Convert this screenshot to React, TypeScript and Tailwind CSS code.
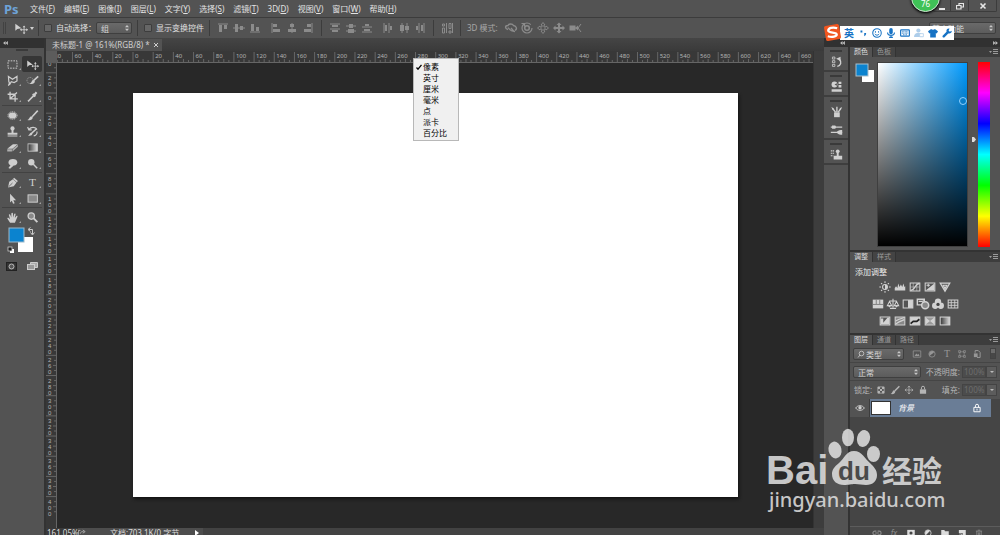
import { useState } from 'react';
import type { ReactNode } from 'react';
import clsx from 'clsx';

const DOC_WIDTH = 600;
const DOC_HEIGHT = 400;
const ZOOM = 1.009;
const ORIGIN_X = 76;
const ORIGIN_Y = 30;

const menus = [
  ['文件', 'F'],
  ['编辑', 'E'],
  ['图像', 'I'],
  ['图层', 'L'],
  ['文字', 'Y'],
  ['选择', 'S'],
  ['滤镜', 'T'],
  ['3D', 'D'],
  ['视图', 'V'],
  ['窗口', 'W'],
  ['帮助', 'H'],
];

const units = ['像素', '英寸', '厘米', '毫米', '点', '派卡', '百分比'];

/* ---------- icons ---------- */

interface IconProps {
  children: ReactNode;
  className?: string;
}

// 16x16 outline icon, fill can be set per shape
function Icon({ children, className = 'w-4 h-4' }: IconProps) {
  return (
    <svg viewBox="0 0 16 16" className={clsx('shrink-0', className)} fill="none" stroke="currentColor" strokeWidth="1.2" aria-hidden="true">
      {children}
    </svg>
  );
}

const solid = { fill: 'currentColor', stroke: 'none' };

const moveShape = (
  <>
    <path d="M1.500 3v8l2.300-2 4.700-.6z" {...solid} />
    <path d="M11.500 6v8M7.500 10h8" strokeWidth="1" />
    <path d="M11.500 5l1.600 2h-3.200zM11.500 15l1.600-2h-3.200zM6.800 10l2-1.600v3.200zM16 10l-2-1.600v3.200z" {...solid} />
  </>
);

const toolGroups: { name: string; shape: ReactNode; plain?: boolean }[][] = [
  [
    { name: '矩形选框', shape: <rect x="2.500" y="3.500" width="11" height="9" strokeDasharray="2 1.300" /> },
    { name: '移动', shape: moveShape, plain: true },
    { name: '多边形套索', shape: <path d="M3 3l5 3.500L13.500 3v5.500l-3.500 2-3.500-1L5 12 3.500 9.500zM4.500 10.500L3 14.500" strokeWidth="1.500" /> },
    {
      name: '快速选择',
      shape: (
        <>
          <circle cx="5" cy="8" r="3.800" strokeDasharray="1.200 1" opacity=".6" />
          <path d="M15 3L9 8.500" strokeWidth="2" />
          <path d="M4.500 12c3.500 1 6 0 6.500-2.700L8.800 7.500C7 7.800 7.300 10.800 4.500 12z" {...solid} />
        </>
      ),
    },
    { name: '裁剪', shape: <path d="M5 2v9h9.500M2 5.200H11.200V14.500M5.500 10.500L13.500 3" strokeWidth="1.600" /> },
    {
      name: '吸管',
      shape: (
        <>
          <path d="M9.500 7L4.500 12 2.500 14" strokeWidth="2" />
          <path d="M8.300 5l3.200 3M10 6.300l3-3.500" strokeWidth="2.600" />
        </>
      ),
    },
  ],
  [
    {
      name: '污点修复画笔',
      shape: (
        <>
          <ellipse cx="8" cy="8" rx="4.800" ry="3.800" {...solid} />
          <ellipse cx="8" cy="8" rx="5.600" ry="4.600" strokeDasharray="1.300 1" />
        </>
      ),
    },
    {
      name: '画笔',
      shape: (
        <>
          <path d="M14.500 2L7.500 9.500" strokeWidth="1.900" />
          <path d="M1.500 13.500c4 .8 6.200 0 6.900-3L6.500 8.800C4 9.400 4.500 12.300 1.500 13.500z" {...solid} />
        </>
      ),
    },
    {
      name: '仿制图章',
      shape: (
        <>
          <circle cx="8" cy="4.200" r="2.600" {...solid} />
          <path d="M6.800 6h2.400v3.500H14V12H2V9.500h4.800zM2 13h12v1.300H2z" {...solid} />
        </>
      ),
    },
    {
      name: '历史记录画笔',
      shape: (
        <>
          <path d="M2 2.500l1.500 3.500h3.500M4 5c2-3 8-3 9.500.5M13.500 8c.5 2.500-1.500 5-4 5.500" strokeWidth="1.500" />
          <path d="M13 4.500L7 10" strokeWidth="1.700" />
          <path d="M2.500 13c3 .7 5 0 5.500-2.400L6.500 9.200C4.500 9.500 4.800 12 2.500 13z" {...solid} />
        </>
      ),
    },
    {
      name: '橡皮擦',
      shape: (
        <>
          <path d="M1.500 9.500L8.500 4h6L8 9.500z" {...solid} />
          <path d="M1.500 10.200h5.800v2.800H1.500zM8 10l6.600-5.400v2.600L8 12.800z" fill="currentColor" stroke="none" opacity=".75" />
        </>
      ),
    },
    {
      name: '渐变',
      shape: (
        <>
          <defs>
            <linearGradient id="tool-gradient">
              <stop offset="0" stopColor="#333" />
              <stop offset="1" stopColor="#ddd" />
            </linearGradient>
          </defs>
          <rect x="2.500" y="3.500" width="11.500" height="9" fill="url(#tool-gradient)" strokeWidth="1" />
        </>
      ),
    },
    {
      name: '涂抹',
      shape: <path d="M3 6.500C3 4 5.500 2.500 8.500 2.500S14 4 14 6.500 11.800 11 9.500 10.500L5 14.500 3 13.500 5.500 10C3.800 9.500 3 8 3 6.500z" {...solid} />,
    },
    {
      name: '减淡',
      shape: (
        <>
          <circle cx="6.500" cy="6.500" r="3.900" {...solid} />
          <path d="M9 9l4.800 4.800" strokeWidth="1.800" />
        </>
      ),
    },
  ],
  [
    {
      name: '钢笔',
      shape: (
        <>
          <path d="M2.500 14l1.500-7L8.500 4l4.500 4-3.500 4.500z" {...solid} />
          <path d="M9.300 3l4.700 4" strokeWidth="2" />
          <path d="M3 13.500L8 8.600" stroke="#535353" strokeWidth=".9" />
        </>
      ),
    },
    {
      name: '横排文字',
      shape: (
        <text x="8" y="12.500" textAnchor="middle" fontSize="14" fontFamily="Liberation Serif, serif" {...solid}>
          T
        </text>
      ),
    },
    { name: '路径选择', shape: <path d="M5 2v11l2.200-2.300 1.500 3.800 2-.8L9 10h3.400z" {...solid} /> },
    { name: '矩形', shape: <rect x="2.500" y="3.500" width="11.500" height="9" fill="#8a8a8a" /> },
  ],
  [
    {
      name: '抓手',
      shape: (
        <path
          d="M5 14.500L1.800 9.500c-.6-1 .8-1.700 1.600-.8L5 10.200 3.500 5c-.2-1.200 1.400-1.500 1.800-.3L6.500 8l.1-5c0-1.200 1.900-1.200 2 0L8.800 8l1.300-4.300c.3-1.200 1.900-.8 1.700.4L10.800 8.500l2-2.300c.7-.9 1.800-.2 1.300.8L12 12l-1 2.500z"
          {...solid}
        />
      ),
    },
    {
      name: '缩放',
      plain: true,
      shape: (
        <>
          <circle cx="6.500" cy="6.300" r="3.900" fill="#888" strokeWidth="1.600" />
          <path d="M9.500 9l4.500 4.700" strokeWidth="2.300" />
        </>
      ),
    },
  ],
];

// bars are given as [x, y, w, h], the guide line as a path
const alignIcons: { guide: string; bars: number[][] }[][] = [
  [
    { guide: 'M3 4h10', bars: [[4, 5, 3, 7], [9, 5, 3, 4]] },
    { guide: 'M2 8h12', bars: [[4, 4, 3, 8], [9, 6, 3, 4]] },
    { guide: 'M3 12h10', bars: [[4, 4, 3, 7], [9, 7, 3, 4]] },
  ],
  [
    { guide: 'M4 3v10', bars: [[5, 4, 4, 3], [5, 9, 7, 3]] },
    { guide: 'M8 3v10', bars: [[6, 4, 4, 3], [4, 9, 8, 3]] },
    { guide: 'M12 3v10', bars: [[7, 4, 4, 3], [4, 9, 7, 3]] },
  ],
  [
    { guide: 'M3 4h10M3 9h10', bars: [[5, 5, 6, 2], [5, 10, 6, 2]] },
    { guide: 'M3 6h10M3 11h10', bars: [[6, 4, 4, 4], [5, 9, 6, 4]] },
    { guide: 'M3 7h10M3 12h10', bars: [[6, 4, 4, 2], [5, 9, 6, 2]] },
  ],
  [
    { guide: 'M4 3v10M9 3v10', bars: [[5, 5, 2, 6], [10, 6, 2, 4]] },
    { guide: 'M6 3v10M11 3v10', bars: [[4, 5, 4, 6], [9, 6, 4, 4]] },
    { guide: 'M7 3v10M12 3v10', bars: [[4, 6, 2, 4], [9, 5, 2, 6]] },
  ],
];

function AlignIcon({ guide, bars }: { guide: string; bars: number[][] }) {
  return (
    <Icon>
      <path d={guide} strokeWidth="1" />
      {bars.map(([x, y, w, h]) => (
        <rect key={`${x}-${y}`} x={x} y={y} width={w} height={h} {...solid} />
      ))}
    </Icon>
  );
}

const mode3d: { name: string; shape: ReactNode }[] = [
  {
    name: '旋转',
    shape: (
      <>
        <path d="M5 9.500C1.500 8.500 2 5.500 5 5.500c1-2 4.500-2 5.500 0 3 .5 4 3.500 1.500 5" strokeWidth="1.400" />
        <path d="M5 7.500c2 3 4 4 7 4M8 8l3 3.500" strokeWidth="1.300" />
      </>
    ),
  },
  { name: '滚动', shape: <><circle cx="8" cy="8" r="5" strokeDasharray="27 5" /><circle cx="8" cy="8" r="2.300" strokeWidth="1.500" /><path d="M2.500 3.500h3v3" /></> },
  { name: '拖动', shape: <path d="M8 2.500L10 5H9v2h2V6l2.500 2L11 10V9H9v2h1l-2 2.500L6 11h1V9H5v1L2.500 8 5 6v1h2V5H6z" strokeWidth=".9" /> },
  { name: '滑动', shape: <path d="M8 2.500L10.500 5H9v2h2.500V5.500L14 8l-2.500 2.500V9H9v2h1.500L8 13.500 5.500 11H7V9H4.500v1.500L2 8l2.500-2.500V7H7V5H5.500z" {...solid} /> },
  { name: '缩放', shape: <><path d="M2.500 5.500h6v5h-6zM8 8l3-2.500v5z" {...solid} /><path d="M14 4l-3 4 3 4" strokeWidth="1" /></> },
];

/* ---------- small shared parts ---------- */

function Divider() {
  return <span className="w-px h-4 shrink-0 bg-[#3c3c3c]" />;
}

function Grip() {
  return <span className="block w-3 h-[2px] mx-auto bg-[#3a3a3a]" />;
}

function Collapse({ right }: { right?: boolean }) {
  return (
    <svg viewBox="0 0 6 5" className={clsx('w-[5px] h-1', right && 'rotate-180')} fill="#bdbdbd" aria-hidden="true">
      <path d="M3 0v5L0 2.500zM6 0v5L3 2.500z" />
    </svg>
  );
}

interface SelectProps {
  label: string;
  options: string[];
  className: string;
  inset?: string;
}

function Select({ label, options, className, inset = 'pl-1' }: SelectProps) {
  return (
    <span className={clsx('relative block', className)}>
      <select
        aria-label={label}
        className={clsx(
          'appearance-none block w-full h-full rounded-[2px] border border-[#3f3f3f] bg-linear-to-b from-[#6a6a6a] to-[#5c5c5c] text-[#d6d6d6] outline-none',
          inset,
        )}
      >
        {options.map(option => (
          <option key={option}>{option}</option>
        ))}
      </select>
      <svg viewBox="0 0 4 6" className="absolute right-[3px] top-1/2 -translate-y-1/2 w-1 h-[6px] pointer-events-none" fill="#c8c8c8" aria-hidden="true">
        <path d="M2 0l2 2.300H0zM2 6l2-2.300H0z" />
      </svg>
    </span>
  );
}

function Check({ label }: { label: string }) {
  return (
    <label className="flex items-center gap-1 whitespace-nowrap">
      <input type="checkbox" className="appearance-none w-2 h-2 rounded-[1px] border border-[#3d3d3d] bg-[#666] checked:bg-[#ddd]" />
      {label}
    </label>
  );
}

function PanelTabs({ tabs }: { tabs: string[] }) {
  const [active, setActive] = useState(tabs[0]);
  return (
    <div className="flex h-[10px] shrink-0 bg-[#3d3d3d]">
      {tabs.map(tab => (
        <button
          key={tab}
          onClick={() => setActive(tab)}
          className={clsx(
            'px-[4px] text-[7px] leading-[10px] border-r border-[#333]',
            tab === active ? 'bg-[#535353] text-[#dedede]' : 'bg-[#444] text-[#9a9a9a]',
          )}
        >
          {tab}
        </button>
      ))}
      <button aria-label="面板菜单" className="ml-auto mr-[2px] text-[#9a9a9a]">
        <svg viewBox="0 0 9 6" className="w-[9px] h-[6px]" fill="currentColor" aria-hidden="true">
          <path d="M0 2h3L1.500 4zM4 0h5v1H4zM4 2h5v1H4zM4 4h5v1H4z" />
        </svg>
      </button>
    </div>
  );
}

/* ---------- top bars ---------- */

function MenuBar() {
  return (
    <header className="relative flex items-center h-[18px] shrink-0 bg-[#535353] border-b border-[#3c3c3c]">
      <span className="w-[26px] pl-1 text-[13px] leading-[16px] font-bold text-[#6ea3d8]">Ps</span>
      <nav className="flex gap-[9px] pl-1">
        {menus.map(([name, key]) => (
          <button key={name} className="leading-[16px] text-[#e2e2e2] whitespace-nowrap">
            {name}(<u className="underline-offset-1">{key}</u>)
          </button>
        ))}
      </nav>
      <div className="flex self-start h-3 ml-auto mr-[3px] border border-t-0 border-[#3c3c3c] rounded-b-[2px] text-[#e6e6e6]">
        <button aria-label="最小化" className="flex items-center justify-center w-4">
          <svg viewBox="0 0 8 8" className="w-2 h-2" aria-hidden="true"><path d="M1 6h6v2H1z" fill="currentColor" /></svg>
        </button>
        <button aria-label="还原" className="flex items-center justify-center w-[18px] border-l border-[#3c3c3c]">
          <svg viewBox="0 0 8 8" className="w-2 h-2" fill="none" stroke="currentColor" aria-hidden="true">
            <path d="M3 3V1.500h4.500V5H5.500M.5 3.500H5V7H.5z" strokeWidth="1.200" />
          </svg>
        </button>
        <button aria-label="关闭" className="flex items-center justify-center w-7 border-l border-[#3c3c3c]">
          <svg viewBox="0 0 8 8" className="w-2 h-2" aria-hidden="true">
            <path d="M1.500 1.500l5 5M6.500 1.500l-5 5" stroke="currentColor" strokeWidth="1.600" />
          </svg>
        </button>
      </div>
      {/* desktop monitor ball */}
      <span className="absolute -top-[17px] right-[60px] flex items-end justify-center w-[29px] h-[29px] pb-[3px] rounded-full border border-[#d4e8d6] bg-[#3fc257] text-[8px] leading-[8px] text-white shadow-sm shadow-black">
        76
      </span>
    </header>
  );
}

function OptionsBar() {
  return (
    <div className="flex items-center h-5 shrink-0 pl-[3px] bg-[#535353] text-[#e0e0e0]">
      <span className="w-[3px] h-3 border-x border-[#424242]" />
      <button aria-label="移动工具" className="flex items-center ml-2 mr-1 text-[#cfcfcf]">
        <Icon className="w-[14px] h-[14px]">{moveShape}</Icon>
        <svg viewBox="0 0 4 3" className="w-1 h-[3px] ml-[2px]" fill="currentColor" aria-hidden="true"><path d="M0 0h4L2 3z" /></svg>
      </button>
      <Divider />
      <div className="flex items-center px-[5px]">
        <Check label="自动选择：" />
        <Select label="自动选择" options={['组', '图层']} className="w-9 h-3" />
      </div>
      <Divider />
      <div className="pl-[6px] pr-[5px]">
        <Check label="显示变换控件" />
      </div>
      <Divider />
      <div className="flex items-center gap-[5px] px-[5px] text-[#8b8b8b]">
        {alignIcons.slice(0, 2).map((group, i) => (
          <div key={i} className="flex">
            {group.map(icon => <AlignIcon key={icon.guide} {...icon} />)}
          </div>
        ))}
      </div>
      <Divider />
      <div className="flex items-center gap-[5px] px-[5px] text-[#8b8b8b]">
        {alignIcons.slice(2).map((group, i) => (
          <div key={i} className="flex">
            {group.map(icon => <AlignIcon key={icon.guide} {...icon} />)}
          </div>
        ))}
      </div>
      <Divider />
      <div className="px-[5px] text-[#8b8b8b]">
        <Icon>
          <path d="M3.500 4h2v2h-2zM3.500 8h2v5h-2zM7.500 3v10M10 3.500h2v5h-2zM10 11h2v2h-2zM13.500 3v10" strokeWidth="1" />
        </Icon>
      </div>
      <Divider />
      <span className="w-[42px] pl-[6px] text-[#a6a6a6] whitespace-nowrap">3D 模式:</span>
      <div className="flex text-[#8b8b8b]">
        {mode3d.map(mode => (
          <button key={mode.name} aria-label={mode.name}>
            <Icon>{mode.shape}</Icon>
          </button>
        ))}
      </div>
      <Select label="工作区" options={['基本功能', '绘画', '摄影']} className="w-[67px] h-3 ml-auto mr-1" inset="pl-[2px]" />
    </div>
  );
}

/* ---------- left tools ---------- */

function ToolBox() {
  const [tool, setTool] = useState('移动');
  return (
    <aside className="flex flex-col w-[45px] shrink-0 bg-[#535353] border-r border-[#333]">
      <div className="flex items-center h-[10px] pl-[3px] bg-[#313131]">
        <Collapse />
      </div>
      <div className="pt-px pb-1"><Grip /></div>
      {toolGroups.map((group, i) => (
        <div key={i} className="grid grid-cols-2 mx-[2px] py-px border-b border-[#424242] last-of-type:border-0">
          {group.map(({ name, shape, plain }) => (
            <button
              key={name}
              aria-label={name}
              onClick={() => setTool(name)}
              className={clsx(
                'relative flex items-center justify-center h-4 text-[#cecece]',
                tool === name && 'rounded-[2px] bg-[#363636]',
              )}
            >
              <Icon className="w-[13px] h-[13px]">{shape}</Icon>
              {!plain && (
                <svg viewBox="0 0 2 2" className="absolute right-px bottom-[2px] w-[2px] h-[2px]" fill="#a0a0a0" aria-hidden="true"><path d="M2 0v2H0z" /></svg>
              )}
            </button>
          ))}
        </div>
      ))}
      <svg viewBox="0 0 34 52" className="w-[34px] h-[52px] ml-[5px]" aria-hidden="true">
        <rect x="13" y="11" width="15" height="15" fill="#fff" />
        <rect x="4" y="2" width="15" height="14" fill="#0b83cf" stroke="#9db7c8" />
        <path d="M24 3.500h3.500V8M25.500 1.500l-2.500 2 2.500 2M25.500 6.500l2 2.500 2-2.500" fill="none" stroke="#ccc" />
        <rect x="5" y="23" width="4" height="4" fill="#fff" />
        <rect x="3" y="21" width="4" height="4" fill="#222" stroke="#ddd" strokeWidth=".7" />
        <rect x="1.500" y="36.500" width="10" height="8" fill="#333" stroke="#222" />
        <circle cx="6.500" cy="40.500" r="2.500" fill="#555" stroke="#bbb" />
        <path d="M25.500 38.500v-2h7v5h-3" fill="#aaa" stroke="#ccc" />
        <rect x="22.500" y="38.500" width="7" height="5" fill="#999" stroke="#ccc" />
      </svg>
    </aside>
  );
}

/* ---------- document ---------- */

const hMarks = Array.from({ length: 38 }, (_, i) => (i - 4) * 20);
const vMarks = Array.from({ length: 23 }, (_, i) => (i - 2) * 20);

function HorizontalRuler() {
  return (
    <svg className="block w-full h-3 bg-[#383838]" stroke="#666" aria-hidden="true">
      <path d="M0 11.500h2000" />
      {hMarks.map(mark => {
        const x = ORIGIN_X + mark * ZOOM;
        const step = 5 * ZOOM;
        return (
          <g key={mark}>
            <path d={`M${x} 1v11M${x + step} 9v3M${x + step * 2} 8v4M${x + step * 3} 9v3`} />
            <text x={x + 2} y="7" fontSize="6" fill="#b4b4b4" stroke="none">{Math.abs(mark)}</text>
          </g>
        );
      })}
    </svg>
  );
}

function VerticalRuler() {
  return (
    <svg className="block w-[11px] h-full shrink-0 bg-[#383838]" stroke="#666" aria-hidden="true">
      <path d="M10.500 0v2000" />
      {vMarks.map(mark => {
        const y = ORIGIN_Y + mark * ZOOM;
        const step = 5 * ZOOM;
        return (
          <g key={mark}>
            <path d={`M0 ${y}h11M8 ${y + step}h3M7 ${y + step * 2}h4M8 ${y + step * 3}h3`} />
            {String(Math.abs(mark)).split('').map((digit, i) => (
              <text key={i} x="2" y={y + 7 + i * 6} fontSize="6" fontFamily="Liberation Sans, sans-serif" fill="#b4b4b4" stroke="none">{digit}</text>
            ))}
          </g>
        );
      })}
    </svg>
  );
}

function UnitMenu() {
  const [unit, setUnit] = useState('像素');
  return (
    <div role="menu" className="absolute left-[367px] top-5 z-10 w-[46px] py-[2px] bg-[#f0f0f0] border border-[#b8b8b8] text-black">
      {units.map(name => (
        <button
          key={name}
          role="menuitemradio"
          aria-checked={unit === name}
          onClick={() => setUnit(name)}
          className="flex items-center w-full h-[11px] leading-[11px]"
        >
          <span className="flex justify-center w-[9px]">
            {unit === name && (
              <svg viewBox="0 0 6 6" className="w-[6px] h-[6px]" aria-hidden="true">
                <path d="M.5 3.500l1.500 1.700L5.500.8" fill="none" stroke="#000" strokeWidth="1.300" />
              </svg>
            )}
          </span>
          {name}
        </button>
      ))}
    </div>
  );
}

function DocumentArea() {
  return (
    <main className="relative flex flex-col flex-1 min-w-0 ml-px">
      <div className="flex items-end h-[13px] shrink-0 bg-linear-to-b from-[#454545] to-[#3a3a3a]">
        <div className="flex items-center gap-1 h-3 pl-[6px] pr-1 bg-[#535353] text-[#cfcfcf] whitespace-nowrap">
          <span>未标题-1 @ 161%(RGB/8) *</span>
          <button aria-label="关闭文档">
            <svg viewBox="0 0 4 4" className="w-1 h-1" aria-hidden="true"><path d="M0 0l4 4M4 0L0 4" stroke="currentColor" /></svg>
          </button>
        </div>
      </div>
      <div className="flex flex-1 min-h-0">
        <div className="flex flex-col flex-1 min-w-0">
          <div className="flex shrink-0">
            <span className="w-[11px] h-3 shrink-0 bg-[#5c5c5c]" />
            <HorizontalRuler />
          </div>
          <div className="flex flex-1 min-h-0">
            <VerticalRuler />
            <div className="flex-1 min-w-0 overflow-hidden bg-[#282828] pl-[76px] pt-[30px]">
              <div
                className="bg-white shadow-[1px_2px_3px_#111]"
                style={{ width: Math.floor(DOC_WIDTH * ZOOM), height: Math.round(DOC_HEIGHT * ZOOM) }}
              />
            </div>
          </div>
        </div>
        <div className="w-[11px] shrink-0 bg-[#3d3d3d] border-l border-[#333]" />
      </div>
      <footer className="flex h-[7px] shrink-0 overflow-hidden bg-[#424242] text-[#dcdcdc] leading-[9px] whitespace-nowrap">
        <span className="w-8 h-3 shrink-0 pl-px bg-[#3a3a3a]">161.05%</span>
        <div className="flex w-[125px] h-3 bg-[#4d4d4d]">
          <svg viewBox="0 0 10 7" className="w-2 h-[6px] mt-px" fill="none" stroke="#bbb" aria-hidden="true">
            <path d="M3 1.500H.5V7M3 5.500c0-2 1.500-2.500 4-2.500M6 1l3 2-3 2" />
          </svg>
          <span className="pl-6">文档:703.1K/0 字节</span>
          <svg viewBox="0 0 4 6" className="w-1 h-[6px] mt-[2px] ml-auto mr-1" fill="#fff" aria-hidden="true"><path d="M0 0l4 3-4 3z" /></svg>
        </div>
      </footer>
      <UnitMenu />
    </main>
  );
}

/* ---------- right side ---------- */

const dockGroups: { name: string; shape: ReactNode }[][] = [
  [{ name: '历史记录', shape: <><path d="M3 2.500h3V5H3zM3 7h3v2.500H3zM3 11.500h3V14H3z" strokeWidth="1" /><path d="M9 14c4.500-1 5.500-5 2.500-9" strokeWidth="1.800" /><path d="M7.500 4.500L13 2v5.500z" {...solid} /></> }],
  [{ name: '属性', shape: <><circle cx="5.500" cy="5.500" r="3.600" {...solid} /><path d="M5.500 5.500L8.500 4v3z" fill="#535353" stroke="none" /><path d="M10.500 2h3.500v3h-3.500zM10.500 6.300H14v3h-3.500zM2 11.500h12.500v3H2z" {...solid} /></> }],
  [
    { name: '画笔预设', shape: <><path d="M5 9h7v6H5z" {...solid} /><path d="M7 9L3 4M8.500 9V2M10 9l3.500-5" strokeWidth="1.700" /><path d="M1.500 2.500l3 1.500-1 2zM15 2.500l-3 1.500 1 2z" {...solid} /></> },
    { name: '画笔', shape: <><path d="M1 5h14M1 11.500h14" strokeWidth="1.400" /><path d="M2.500 3h4l1 2-1 2h-4zM8 11.500c2-3 5-3 7-3v6c-2 0-5 0-7-3z" {...solid} /></> },
  ],
  [{ name: '仿制源', shape: <><path d="M1 3.500h4M1 6.500h4M1 9.500h3" strokeWidth="1.400" strokeDasharray="1.700 .6" /><circle cx="9.500" cy="4" r="2.300" {...solid} /><path d="M8.300 5h2.400v4.500H15V14H4.500V9.500h3.800z" {...solid} /></> }],
];

function Dock() {
  return (
    <div className="w-6 shrink-0 bg-[#535353]">
      {dockGroups.map((group, i) => (
        <div key={i} className="pt-[3px] border-b-2 border-[#3e3e3e]">
          <Grip />
          {group.map(({ name, shape }) => (
            <button key={name} aria-label={name} className="flex items-center justify-center w-full h-[18px] text-[#d0d0d0]">
              <Icon className="w-[13px] h-[13px]">{shape}</Icon>
            </button>
          ))}
        </div>
      ))}
    </div>
  );
}

function ColorPanel() {
  return (
    <section className="flex flex-col">
      <PanelTabs tabs={['颜色', '色板']} />
      <div className="flex h-[193px] pt-[5px] pl-[5px] pr-[10px]">
        <svg viewBox="0 0 20 22" className="w-5 h-[22px]" aria-hidden="true">
          <rect x="7" y="8" width="12" height="12" fill="#fff" />
          <rect x="1" y="2" width="12" height="12" fill="#0b83cf" stroke="#a9bfcc" />
        </svg>
        <div className="relative flex-1 h-[185px] ml-[2px] border border-[#3f3f3f] bg-[linear-gradient(to_bottom,transparent,#000),linear-gradient(to_right,#fff,#009bff)]">
          <span className="absolute right-0 top-[34px] w-2 h-2 rounded-full border border-[#8fd0ff]" />
        </div>
        <svg viewBox="0 0 10 185" className="w-[10px] h-[185px] shrink-0" fill="#ddd" aria-hidden="true"><path d="M4 75h2l2 2.500-2 2.500H4z" /></svg>
        <div className="w-3 h-[185px] shrink-0 bg-[linear-gradient(to_bottom,#f00,#f0f,#00f,#0ff,#0f0,#ff0,#f00)]" />
      </div>
    </section>
  );
}

const box = <path d="M2.500 3.500h11v9h-11z" />;

const adjustments: ReactNode[][] = [
  [
    <><circle cx="8" cy="8" r="2.800" /><path d="M8 5.200a2.800 2.800 0 0 1 0 5.600z" {...solid} /><path d="M8 1.500v2M8 12.500v2M1.500 8h2M12.500 8h2M3.500 3.500l1.300 1.300M11.200 11.200l1.300 1.300M3.500 12.500l1.300-1.300M11.200 4.800l1.300-1.300" /></>,
    <path d="M2 12V9l1.500-2L5 9l1-5 1.500 4L9 5l1.500 3L12 4l1 4 1-1v5z" {...solid} />,
    <>{box}<path d="M6 3.500v9M10 3.500v9M3 8h10" strokeWidth=".6" /><path d="M3 12c5 0 5-8 10-8" strokeWidth="1.500" /></>,
    <>{box}<path d="M3 12L13 4v8z" {...solid} /><path d="M4 6h4M6 4.300v3.400" strokeWidth="1.200" /></>,
    <path d="M2.500 3.500h11L8 13zM6 6l2 4 2-4z" strokeWidth="1.400" />,
  ],
  [
    <><path d="M2 3h12v10H2z" {...solid} /><path d="M2 8.500h12M6 3v5M10 3v5" stroke="#777" strokeWidth="1" /></>,
    <><path d="M8 2v10M4.500 13h7M4 4.500h8M4 5l-2.500 5h5zM12 5l-2.500 5h5z" /><path d="M1.500 9.500h5L4 12zM9.500 9.500h5L12 12z" {...solid} /></>,
    <>{box}<path d="M8 3.500h5.500v9H8z" {...solid} /></>,
    <><path d="M1.500 2.500h8V9h-8z" strokeWidth="1.600" /><path d="M3 5h4l2-1" /><circle cx="10.500" cy="9.500" r="4" fill="#888" strokeWidth="1.800" /></>,
    <><circle cx="8" cy="5.200" r="3.600" {...solid} /><circle cx="4.800" cy="10" r="3.600" {...solid} /><circle cx="11.200" cy="10" r="3.600" {...solid} /><circle cx="8" cy="8.500" r="1.900" fill="#444" stroke="none" /></>,
    <>{box}<path d="M2.500 6.500h11M2.500 9.500h11M6 3.500v9M10 3.500v9" strokeWidth="1" /></>,
  ],
  [
    <><path d="M2.500 3.500h11v9h-11z" fill="#555" /><path d="M3 12V5h3v5l5-6h2v8z" {...solid} /></>,
    <><path d="M2.500 3.500h11v9h-11z" fill="#888" /><path d="M3 8l4-2 6-2M3 11.500l4-2.500 6-2.500" strokeWidth="1.500" /></>,
    <><path d="M2.500 3.500h11v9h-11z" fill="currentColor" /><path d="M3 11l3-2.500h4L13 6" stroke="#222" strokeWidth="2" /></>,
    <><path d="M2.500 3.500h11v9h-11z" fill="#999" /><path d="M3 4l5 4-5 4zM13 4L8 8l5 4z" {...solid} /></>,
    <><rect x="2.500" y="3.500" width="11" height="9" fill="url(#tool-gradient)" /></>,
  ],
];

function AdjustmentsPanel() {
  return (
    <section className="flex flex-col">
      <PanelTabs tabs={['调整', '样式']} />
      <div className="h-[71px] pl-[5px] pt-[3px] text-[#e8e8e8]">
        <h2 className="h-[13px] leading-[13px]">添加调整</h2>
        <div className="flex flex-col items-center w-[120px] text-[#d2d2d2]">
          {adjustments.map((row, i) => (
            <div key={i} className="flex gap-[1px] h-[17px] items-center">
              {row.map((shape, j) => (
                <button key={j} aria-label="调整图层"><Icon className="w-[14px] h-[14px]">{shape}</Icon></button>
              ))}
            </div>
          ))}
        </div>
      </div>
    </section>
  );
}

const filterShapes: ReactNode[] = [
  <><path d="M2 3h12v10H2z" /><path d="M4 11l3-4 2 2 1.500-1.500L12 11z" {...solid} /></>,
  <><circle cx="8" cy="8" r="5" /><path d="M11.500 4.500A5 5 0 0 0 4.500 11.500C6 8 9 9 11.500 4.500z" {...solid} /></>,
  <text x="8" y="13" textAnchor="middle" fontSize="16" fontFamily="Liberation Serif, serif" {...solid}>T</text>,
  <path d="M4.500 4.500h7v7h-7zM2.500 2.500h3v3h-3zM10.500 2.500h3v3h-3zM2.500 10.500h3v3h-3zM10.500 10.500h3v3h-3z" strokeWidth="1" />,
  <><path d="M5 6V2.500h5l3 3v8H8" strokeWidth="1.600" /><path d="M3 7h6v6H3z" {...solid} /></>,
];

const lockShapes: ReactNode[] = [
  <><path d="M3 3h10v10H3z" /><path d="M3 3h3.300v3.300H3zM9.700 3H13v3.300H9.700zM6.300 6.300h3.400v3.400H6.300zM3 9.700h3.300V13H3zM9.700 9.700H13V13H9.700z" {...solid} /></>,
  <><path d="M15 2L7.500 9.500" strokeWidth="2.400" /><path d="M1 14.500c5 .5 7-.5 7.500-4L6.200 8.500C4 9 4.500 12.500 1 14.500z" {...solid} /></>,
  <path d="M8 2v12M2 8h12M6 4l2-2.500L10 4M6 12l2 2.500 2-2.500M4 6L1.500 8 4 10M12 6l2.500 2-2.500 2" />,
  <><path d="M3 7h10v7H3z" {...solid} /><path d="M5.500 7V4.500a2.500 2.500 0 0 1 5 0V7" strokeWidth="1.600" /></>,
];

const layerActions: { name: string; shape: ReactNode; dim?: boolean }[] = [
  { name: '链接图层', dim: true, shape: <path d="M7 5H4.500a3 3 0 0 0 0 6H7M9 5h2.500a3 3 0 0 1 0 6H9M5 8h6" strokeWidth="1.800" /> },
  { name: '图层样式', dim: true, shape: <text x="8" y="12" textAnchor="middle" fontSize="13" fontStyle="italic" {...solid}>fx</text> },
  { name: '图层蒙版', shape: <><path d="M2 3h12v10H2z" {...solid} /><circle cx="8" cy="8" r="2.500" fill="#444" stroke="none" /></> },
  { name: '调整图层', shape: <><circle cx="8" cy="8" r="5" /><path d="M11.500 4.500A5 5 0 0 0 4.500 11.500z" {...solid} /></> },
  { name: '新建组', shape: <path d="M2 3h5l1 2h6v9H2z" {...solid} /> },
  { name: '新建图层', shape: <><path d="M3 3h11v11H9V8H3z" {...solid} /><path d="M3.500 9.500h4v4" /></> },
  { name: '删除图层', dim: true, shape: <path d="M3 5h10M6 3.500h4M4.500 5v9h7V5M7 7v5M9 7v5" strokeWidth="1.400" /> },
];

function Percent({ label }: { label: string }) {
  return (
    <label className="flex items-center ml-auto whitespace-nowrap text-[#b5b5b5]">
      {label}
      <input defaultValue="100%" disabled className="w-6 h-3 ml-[2px] pl-px border border-[#444] bg-[#4c4c4c] text-[#6d6d6d]" />
      <span className="flex items-center justify-center w-[11px] h-3 border border-[#444] bg-[#5c5c5c]">
        <svg viewBox="0 0 4 2" className="w-1 h-[2px]" fill="#bbb" aria-hidden="true"><path d="M0 0h4L2 2z" /></svg>
      </span>
    </label>
  );
}

function LayersPanel() {
  return (
    <section className="flex flex-col flex-1 min-h-0">
      <PanelTabs tabs={['图层', '通道', '路径']} />
      <div className="flex items-center h-[18px] shrink-0 px-[3px] border-b border-[#454545]">
        <div className="relative">
          <Select label="类型" options={['类型', '名称']} className="w-[51px] h-3" inset="pl-[12px]" />
          <svg viewBox="0 0 8 8" className="absolute left-1 top-[2px] w-2 h-2" fill="none" stroke="#bbb" aria-hidden="true">
            <circle cx="4.500" cy="3.500" r="2.300" /><path d="M3 5L1 7.500" />
          </svg>
        </div>
        <div className="flex gap-[5px] pl-2 text-[#979797]">
          {filterShapes.map((shape, i) => (
            <button key={i} aria-label="过滤图层"><Icon className="w-[10px] h-[10px]">{shape}</Icon></button>
          ))}
        </div>
        <button aria-label="打开或关闭过滤" className="w-[6px] h-[11px] ml-auto mr-px border border-[#434343] bg-[#474747]">
          <span className="block h-1 mb-[5px] bg-[#6b6b6b]" />
        </button>
      </div>
      <div className="flex items-center h-[18px] shrink-0 px-[3px] border-b border-[#454545]">
        <Select label="混合模式" options={['正常', '溶解']} className="w-[68px] h-3" />
        <Percent label="不透明度:" />
      </div>
      <div className="flex items-center h-[18px] shrink-0 pl-1 pr-[3px] text-[#b5b5b5]">
        锁定:
        <div className="flex gap-1 pl-1">
          {lockShapes.map((shape, i) => (
            <button key={i} aria-label="锁定"><Icon className="w-[10px] h-[10px]">{shape}</Icon></button>
          ))}
        </div>
        <Percent label="填充:" />
      </div>
      <div className="flex-1 min-h-0 bg-[#454545] pr-[9px]">
        <div className="flex items-center h-[18px] bg-[#535353]">
          <button aria-label="图层可见性" className="flex justify-center w-[19px] text-[#d0d0d0]">
            <Icon className="w-[10px] h-[10px]"><path d="M1 8c3.500-5 10.500-5 14 0-3.500 5-10.500 5-14 0z" strokeWidth="1.500" /><circle cx="8" cy="7.500" r="2.700" {...solid} /></Icon>
          </button>
          <div className="flex flex-1 items-center h-full pl-px pr-[9px] border-l border-[#3c3c3c] bg-[#6a7d96] text-white">
            <span className="w-5 h-[14px] bg-white border border-[#333]" />
            <span className="pl-[7px] italic">背景</span>
            <Icon className="w-[10px] h-[10px] ml-auto"><path d="M3 7h10v7H3zM5.500 7V4.500a2.500 2.500 0 0 1 5 0V7M8 9v3" strokeWidth="1.500" /></Icon>
          </div>
        </div>
      </div>
      <div className="flex h-[9px] shrink-0 gap-[7px] pt-px pl-[22px] overflow-hidden border-t border-[#5c5c5c] bg-[#484848]">
        {layerActions.map(({ name, shape, dim }) => (
          <button key={name} aria-label={name} className={clsx('h-[10px]', dim ? 'text-[#8a8a8a]' : 'text-[#dcdcdc]')}>
            <Icon className="w-[10px] h-[10px]">{shape}</Icon>
          </button>
        ))}
      </div>
    </section>
  );
}

function RightSide() {
  return (
    <div className="flex w-[176px] shrink-0 flex-col bg-[#333]">
      <div className="flex items-center justify-between h-[9px] shrink-0 pl-4 pr-[2px] bg-[#313131]">
        <Collapse />
        <Collapse right />
      </div>
      <div className="flex flex-1 min-h-0 gap-[2px]">
        <Dock />
        <div className="flex flex-col flex-1 min-w-0 gap-[2px] [&>section]:bg-[#535353]">
          <ColorPanel />
          <AdjustmentsPanel />
          <LayersPanel />
        </div>
      </div>
    </div>
  );
}

/* ---------- floating pieces ---------- */

const imeShapes: ReactNode[] = [
  <path d="M4 4h3v3H4zM10 8h3c0 3-1 4-3 5z" {...solid} />,
  <><circle cx="8" cy="8" r="6.800" strokeWidth="1.700" /><path d="M5.500 5v2.500M10.500 5v2.500M4.500 9.500c2 2.700 5 2.700 7 0" strokeWidth="1.500" /></>,
  <><rect x="5.200" y="0" width="5.600" height="9.800" rx="2.800" {...solid} /><path d="M2.500 7c0 6 11 6 11 0M8 11.500V15M5 15h6" strokeWidth="1.800" /></>,
  <><rect x="1" y="3" width="14" height="10" rx="1" strokeWidth="1.800" /><path d="M3 6h10M3 8.300h10M5 10.800h6" strokeDasharray="1.500 .8" strokeWidth="1.400" /></>,
  <g opacity=".35"><circle cx="7" cy="4" r="3.300" {...solid} /><path d="M0 14.500c0-9 14-9 14 0z" {...solid} /><path d="M9 9h6v5H9z" fill="#fff" /></g>,
  <path d="M5 1.500c1 1.500 5 1.500 6 0L16 5l-2 3.700L12.500 8v7h-9V8L2 8.700 0 5z" {...solid} />,
  <path d="M15.500 4.500l-3 1.500-2-2L12 1C8 .5 6.500 3 7.300 6L1 12.300c-1 2 1 3.700 2.700 2.700L10 8.700c3 .8 6-1 5.500-4.200z" {...solid} />,
];

function InputMethodBar() {
  return (
    <div className="absolute left-[824px] top-6 z-20 flex items-center h-[17px] text-[#1672c4]">
      <svg viewBox="0 0 18 18" className="relative -mr-px w-[17px] h-[17px]" aria-hidden="true">
        <rect x="1" y="1" width="16" height="16" rx="2" fill="#f1551f" transform="rotate(-10 9 9)" />
        <path d="M14 4.500C9 3 4.500 4.300 4.500 7c0 3.200 9 1.300 9 4.200 0 2.300-5 3-9.500 1.800" fill="none" stroke="#fff" strokeWidth="2.400" />
      </svg>
      <div className="flex items-center gap-1 h-[14px] pl-1 pr-[2px] bg-white">
        <span className="text-[10px] leading-[14px] font-bold">英</span>
        {imeShapes.map((shape, i) => (
          <Icon key={i} className="w-[10px] h-[10px]">{shape}</Icon>
        ))}
      </div>
    </div>
  );
}

function Watermark() {
  return (
    <svg viewBox="0 0 184 92" className="absolute right-[50px] bottom-[18px] z-20 w-[184px] h-[92px] pointer-events-none" fill="#dedede" opacity=".87" aria-hidden="true">
      <text x="0" y="59" fontSize="40" fontWeight="700" fontFamily="Liberation Sans, sans-serif">Bai</text>
      <ellipse cx="69" cy="25" rx="6.500" ry="8.500" transform="rotate(-12 69 25)" />
      <ellipse cx="82" cy="12.500" rx="6" ry="8.700" />
      <ellipse cx="97.500" cy="13.500" rx="6.500" ry="8.500" transform="rotate(14 97.500 13.500)" />
      <ellipse cx="107.500" cy="29" rx="6.500" ry="8" />
      <path d="M88 26c-8 0-10 8-15 12-5 4-7 7-7 11 0 7 5 11 12 11 5 0 7-1 11-1s7 1 11 1c7 0 11-4 11-10 0-5-3-8-7-12-5-4-8-12-16-12z" />
      <text x="88" y="55" textAnchor="middle" fontSize="26" fontWeight="700" fontFamily="Liberation Sans, sans-serif" fill="#4b4b4b">du</text>
      <text x="116" y="57" fontSize="30" fontWeight="700">经验</text>
      <text x="3" y="82" fontSize="20" fontFamily="Noto Sans, sans-serif" fontWeight="500">jingyan.baidu.com</text>
    </svg>
  );
}

export default function App() {
  return (
    <div className="relative flex flex-col h-screen overflow-hidden bg-[#333] text-[8px] leading-[12px] [font-family:'Noto_Sans','Noto_Sans_CJK_SC',sans-serif]">
      <MenuBar />
      <OptionsBar />
      <div className="flex flex-1 min-h-0">
        <ToolBox />
        <DocumentArea />
        <RightSide />
      </div>
      <InputMethodBar />
      <Watermark />
    </div>
  );
}
